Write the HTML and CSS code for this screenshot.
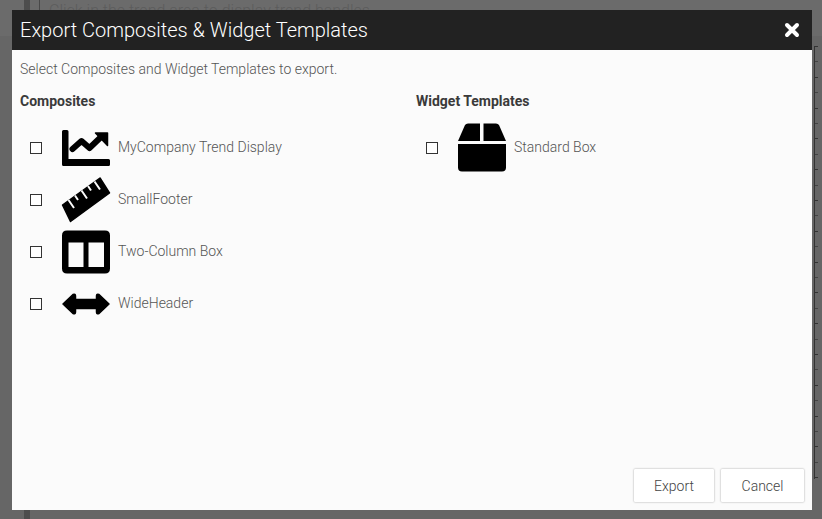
FILE: index.html
```html
<!DOCTYPE html>
<html lang="en">
<head>
<meta charset="utf-8">
<title>Export Composites &amp; Widget Templates</title>
<link rel="stylesheet" href="styles.css">
</head>
<body>
<div class="backdrop">
  <div class="bg-band"></div>
  <div class="bg-bar"></div>
  <div class="bg-rule"></div>
  <div class="bg-text">Click in the trend area to display trend handles.</div>
  <div class="bg-axis"></div>
</div>
<div class="dialog">
  <header class="titlebar">
    <h1 class="title">Export Composites &amp; Widget Templates</h1>
    <svg class="close" width="16" height="16" viewBox="0 0 16 16"><path d="M3 3L13 13M13 3L3 13" stroke="#fff" stroke-width="4" stroke-linecap="round"/></svg>
  </header>
  <main class="body">
    <p class="intro">Select Composites and Widget Templates to export.</p>
    <div class="columns">
      <section class="col">
        <h2 class="heading">Composites</h2>
        <div class="row"><span class="check"></span>
          <svg class="icon" viewBox="0 0 48 48"><path d="M1.500 7H5Q6.500 7 6.500 8.500V36H46.500Q48 36 48 37.500V41.500Q48 43 46.500 43H1.500Q0 43 0 41.500V8.500Q0 7 1.500 7Z"/><path d="M10.500 26L19.500 18L27.500 25L39 14" fill="none" stroke="#000" stroke-width="6" stroke-linejoin="round" stroke-linecap="round"/><path d="M33.500 10H45.500V22.500Z" stroke="#000" stroke-width="1.500" stroke-linejoin="round"/></svg>
          <span class="label">MyCompany Trend Display</span></div>
        <div class="row"><span class="check"></span>
          <svg class="icon" viewBox="0 0 48 48"><path d="M0.500 30L38 3L47.500 18L8.500 46.500Z" stroke="#000" stroke-width="1.500" stroke-linejoin="round"/><path d="M6.500 25L12 33M13 20.500L16 25M19.500 15.500L25 23.500M26 11L29 15.500M32.500 6.500L38 14.500" fill="none" stroke="#fbfbfb" stroke-width="2"/></svg>
          <span class="label">SmallFooter</span></div>
        <div class="row"><span class="check"></span>
          <svg class="icon" viewBox="0 0 48 48"><path fill-rule="evenodd" d="M5 3.500H43Q48 3.500 48 8.500V41.500Q48 46.500 43 46.500H5Q0 46.500 0 41.500V8.500Q0 3.500 5 3.500ZM6.500 15.500V40H21.500V15.500ZM26.500 15.500V40H42V15.500Z"/></svg>
          <span class="label">Two-Column Box</span></div>
        <div class="row"><span class="check"></span>
          <svg class="icon" viewBox="0 0 48 48"><path d="M1 25L11 15.500Q13.500 14.500 13.500 17V20.500H34.500V17Q34.500 14.500 37 15.500L47 25L37 34.500Q34.500 35.500 34.500 33V29.500H13.500V33Q13.500 35.500 11 34.500Z" stroke="#000" stroke-width="1.500" stroke-linejoin="round"/></svg>
          <span class="label">WideHeader</span></div>
      </section>
      <section class="col">
        <h2 class="heading">Widget Templates</h2>
        <div class="row"><span class="check"></span>
          <svg class="icon" viewBox="0 0 48 48"><path d="M10 0.500H22V18H0L7 2Q8 0.500 10 0.500ZM25.500 0.500H38Q40 0.500 41 2L48 18H25.500ZM0 21H48V44.500Q48 48.500 44 48.500H4Q0 48.500 0 44.500Z"/></svg>
          <span class="label">Standard Box</span></div>
      </section>
    </div>
  </main>
  <footer class="actions">
    <button class="btn btn-export">Export</button>
    <button class="btn btn-cancel">Cancel</button>
  </footer>
</div>
</body>
</html>
```
FILE: styles.css
```css
* { box-sizing: border-box; }
html, body { margin: 0; height: 100%; overflow: hidden; }
body {
  background: #666;
  font-family: Roboto, "Liberation Sans", sans-serif;
  padding: 10px 10px 9px 12px;
  height: 519px;
}
.backdrop { position: absolute; inset: 0; overflow: hidden; }
.bg-band { position: absolute; left: 0; right: 0; top: 0; height: 36px; background: #6b6b6b; }
.bg-bar { position: absolute; left: 24px; top: 0; bottom: 0; width: 6px; background: #4d4d4d; }
.bg-rule { position: absolute; left: 39px; top: 0; height: 10px; width: 1px; background: #484848; }
.bg-text { position: absolute; left: 49px; top: 1px; height: 9px; overflow: hidden; font-size: 16px; font-weight: 300; color: #5c5c5c; white-space: nowrap; }
.bg-axis {
  position: absolute;
  left: 814px;
  top: 46px;
  width: 4px;
  height: 433px;
  border-left: 1px solid #333;
  background: repeating-linear-gradient(to bottom, #333 0 1px, transparent 1px 15.4px, #444 15.4px 16.4px, transparent 16.4px 30.8px) left top / 3px 100% no-repeat;
}
.dialog {
  position: relative;
  width: 800px;
  height: 500px;
  background: #fbfbfb;
  display: flex;
  flex-direction: column;
}
.titlebar {
  height: 40px;
  background: #222;
  color: #fff;
  display: flex;
  align-items: center;
  justify-content: space-between;
  padding: 0 12px 0 8px;
  flex: none;
}
.title { margin: 0; font-size: 20px; font-weight: 300; }
.body { flex: 1; padding: 11px 8px 0; min-height: 0; }
.intro { margin: 0; font-size: 14px; line-height: 16px; font-weight: 300; color: #555; }
.columns { display: grid; grid-template-columns: 396px 1fr; margin-top: 16px; }
.heading { margin: 0 0 12px; font-size: 14px; line-height: 16px; font-weight: 700; color: #3a3a3a; }
.row { display: flex; align-items: center; height: 52px; }
.check {
  width: 12px; height: 12px;
  border: 1px solid #333;
  margin: 2px 0 0 10px;
  background: #fff;
  flex: none;
}
.icon { width: 48px; height: 48px; margin-left: 20px; margin-right: 8px; flex: none; fill: #000; overflow: visible; }
.label { font-size: 14px; font-weight: 300; color: #555; }
.actions { display: flex; justify-content: flex-end; gap: 7px; padding: 0 8px 8px 0; flex: none; }
.btn {
  height: 33px;
  background: #fff;
  border: 0;
  border-radius: 1px;
  box-shadow: 0 0 2px rgba(0,0,0,.4);
  font: 300 14px Roboto, "Liberation Sans", sans-serif;
  color: #444;
  padding: 0;
}
.btn-export { width: 80px; }
.btn-cancel { width: 83px; }
```
